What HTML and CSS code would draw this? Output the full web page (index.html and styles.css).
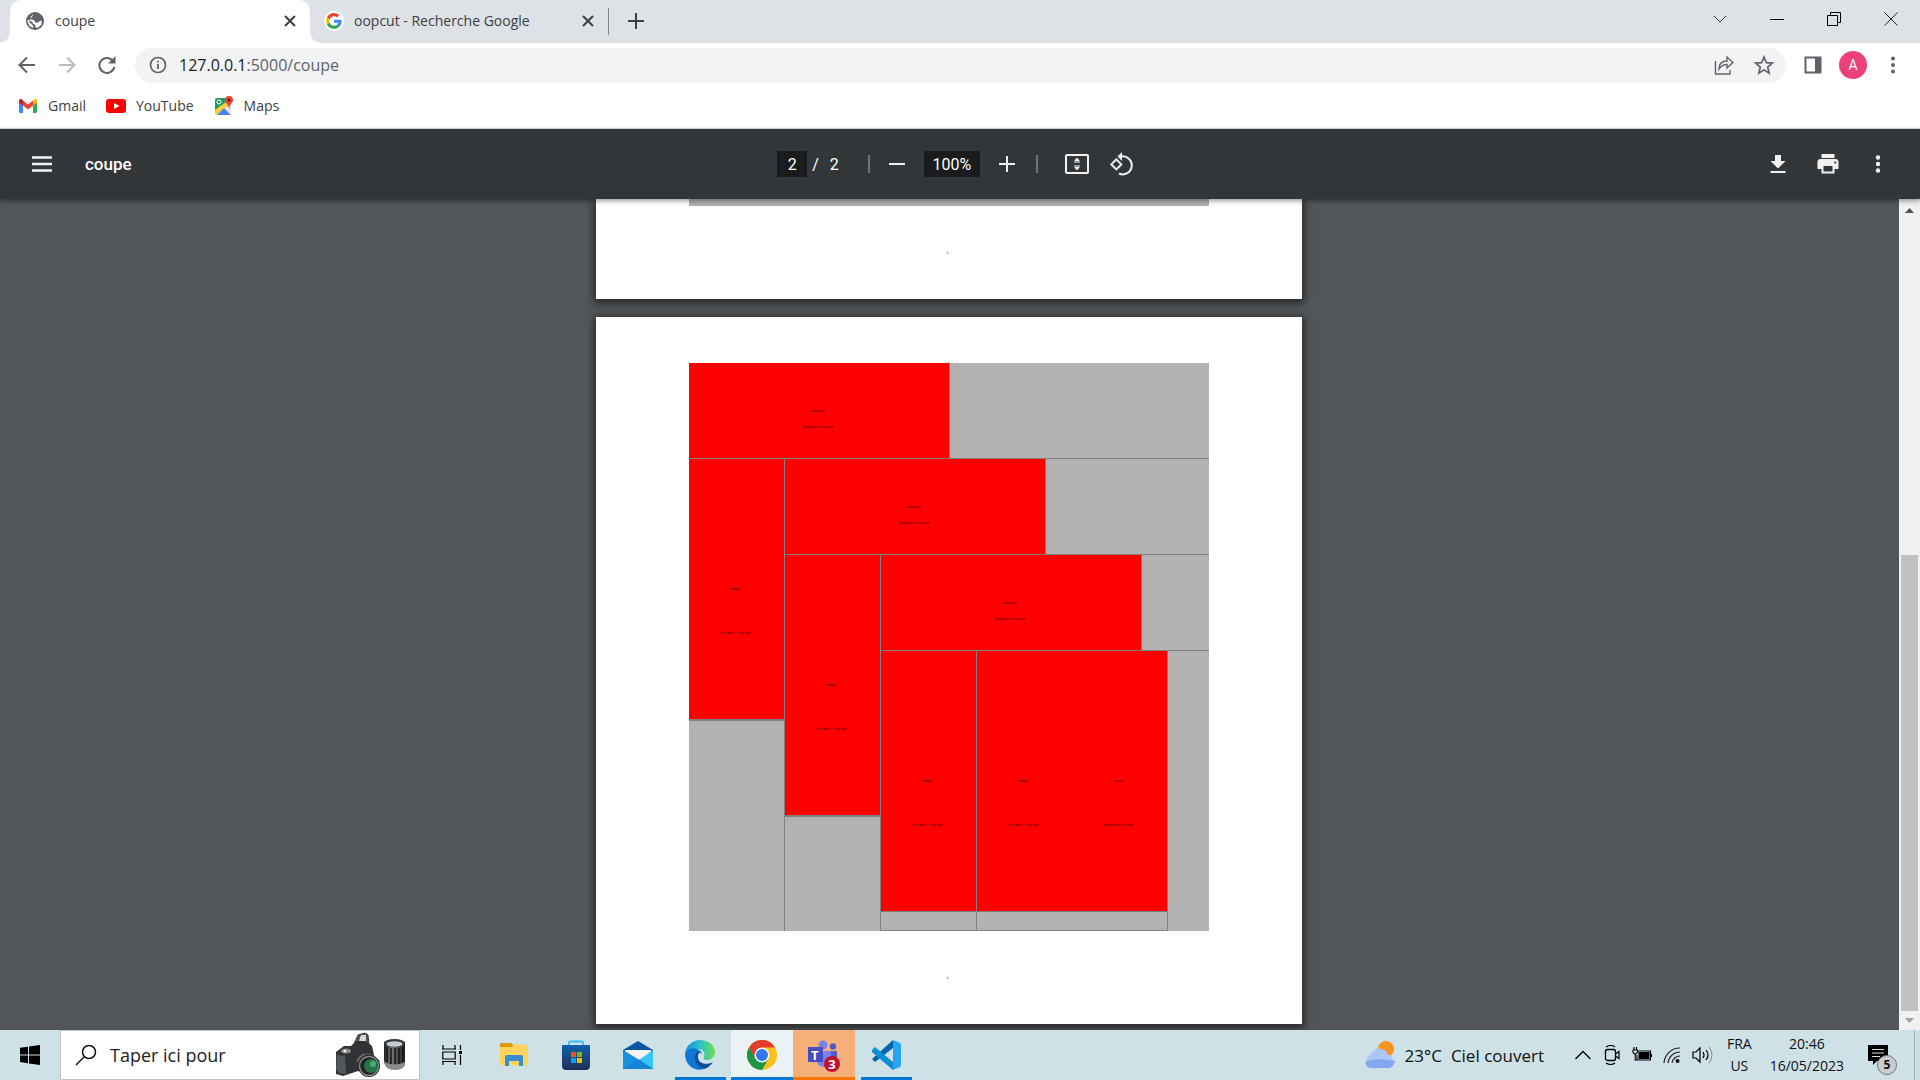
FILE: index.html
```html
<!DOCTYPE html>
<html lang="fr">
<head>
<meta charset="utf-8">
<title>coupe</title>
<link rel="stylesheet" href="styles.css">
</head>
<body>
<header class="browser">
  <div class="tabstrip">
    <div class="tab tab-active">
      <svg class="favicon" width="20" height="20" viewBox="0 0 20 20"><circle cx="10" cy="10" r="9" fill="#5f6368"/><path d="M9 2.500L5.500 6 6 8.500l3 .5 1.500 2.500H13l2.500-2 1.500 1-1 3.500-3.500 3-2-1-.5-2.500-2-.5L7.500 11 3 8.500l-.5 2.500L5 15.500l3.500 1.500-1-3L4 10.500" fill="#fff"/><path d="M10.500 2l4 1.500 2 3.500-3 1.500-1.500-2-2.500-1z" fill="#5f6368"/></svg>
      <span class="tab-title">coupe</span>
      <button class="tab-close" aria-label="Fermer l'onglet coupe"><svg width="12" height="12" viewBox="0 0 12 12"><path d="M1 1l10 10M11 1L1 11" stroke="#3c4043" stroke-width="2"/></svg></button>
    </div>
    <div class="tab">
      <svg class="favicon" width="20" height="20" viewBox="0 0 48 48"><circle cx="24" cy="24" r="24" fill="#fff"/><g transform="translate(5 5) scale(.79)"><path fill="#ea4335" d="M24 9.500c3.500 0 6.700 1.200 9.200 3.600l6.900-6.900C35.900 2.400 30.500 0 24 0 14.600 0 6.500 5.400 2.600 13.200l8 6.200C12.400 13.700 17.700 9.500 24 9.500z"/><path fill="#4285f4" d="M47 24.500c0-1.600-.2-3.100-.4-4.500H24v9h12.900c-.6 3-2.200 5.500-4.700 7.200l7.700 6C44.400 38 47 31.800 47 24.500z"/><path fill="#fbbc05" d="M10.500 28.600a14.500 14.500 0 010-9.200l-8-6.200a24 24 0 000 21.600z"/><path fill="#34a853" d="M24 48c6.500 0 11.900-2.100 15.900-5.800l-7.700-6c-2.200 1.500-4.900 2.300-8.200 2.300-6.300 0-11.600-4.200-13.500-9.900l-8 6.200C6.500 42.600 14.600 48 24 48z"/></g></svg>
      <span class="tab-title">oopcut - Recherche Google</span>
      <button class="tab-close" aria-label="Fermer l'onglet Google"><svg width="12" height="12" viewBox="0 0 12 12"><path d="M1 1l10 10M11 1L1 11" stroke="#3c4043" stroke-width="2"/></svg></button>
    </div>
    <button class="new-tab" aria-label="Nouvel onglet"><svg width="16" height="16" viewBox="0 0 16 16"><path d="M8 0v16M0 8h16" stroke="#3c4043" stroke-width="2"/></svg></button>
    <div class="window-buttons">
      <button aria-label="Rechercher dans les onglets"><svg width="14" height="14" viewBox="0 0 14 14"><path d="M1 4l6 6 6-6" fill="none" stroke="#333"/></svg></button>
      <button aria-label="Réduire"><svg width="14" height="14" viewBox="0 0 14 14"><path d="M0 7.500h14" stroke="#000"/></svg></button>
      <button aria-label="Restaurer"><svg width="14" height="14" viewBox="0 0 14 14"><path d="M.5 3.500h10v10H.5zM3.500 3V.5h10v10H11" fill="none" stroke="#000"/></svg></button>
      <button aria-label="Fermer"><svg width="14" height="14" viewBox="0 0 14 14"><path d="M.5.5l13 13M13.500.5l-13 13" stroke="#222"/></svg></button>
    </div>
  </div>
  <div class="navbar">
    <button class="nav-button" aria-label="Retour"><svg width="18" height="18" viewBox="0 0 18 18"><path d="M17 9H2M9 1.500L1.500 9 9 16.500" fill="none" stroke="#5f6368" stroke-width="2"/></svg></button>
    <button class="nav-button" aria-label="Avancer"><svg width="18" height="18" viewBox="0 0 18 18"><path d="M1 9h15M9 1.500L16.500 9 9 16.500" fill="none" stroke="#babcbe" stroke-width="2"/></svg></button>
    <button class="nav-button" aria-label="Actualiser"><svg width="18" height="18" viewBox="0 0 18 18"><path d="M15 5a7.500 7.500 0 101.300 6" fill="none" stroke="#5f6368" stroke-width="2"/><path d="M17.500 0v7.500H10z" fill="#5f6368"/></svg></button>
    <div class="omnibox">
      <svg width="18" height="18" viewBox="0 0 18 18"><circle cx="9" cy="9" r="7.500" fill="none" stroke="#5f6368" stroke-width="1.700"/><path d="M9 8v5M9 4.800v1.700" stroke="#5f6368" stroke-width="1.800"/></svg>
      <a class="url" href="#coupe">127.0.0.1<span class="url-path">:5000/coupe</span></a>
      <button aria-label="Partager"><svg width="20" height="20" viewBox="0 0 20 20" fill="none" stroke="#5f6368" stroke-width="1.400"><path d="M1.500 6v13H16v-4"/><path d="M5 14c0-5 3-8 8-8V2l6 5.500-6 5.500V9.500c-4 0-6 1.500-8 4.500z"/></svg></button>
      <button aria-label="Ajouter aux favoris"><svg width="20" height="20" viewBox="0 0 20 20"><path d="M10 2l2.300 5.700 6 .4-4.600 4 1.500 6L10 14.900 4.800 18.100l1.500-6-4.600-4 6-.4z" fill="none" stroke="#5f6368" stroke-width="1.700"/></svg></button>
    </div>
    <button class="side-button" aria-label="Panneau latéral"><svg width="18" height="18" viewBox="0 0 18 18"><path d="M1.500 1.500h15v15h-15z" fill="none" stroke="#5f6368" stroke-width="2"/><path d="M11 1h6v16h-6z" fill="#5f6368"/></svg></button>
    <button class="side-button" aria-label="Profil"><span class="avatar">A</span></button>
    <button class="side-button" aria-label="Menu"><svg width="6" height="18" viewBox="0 0 6 18" fill="#5f6368"><circle cx="3" cy="2.500" r="2"/><circle cx="3" cy="9" r="2"/><circle cx="3" cy="15.500" r="2"/></svg></button>
  </div>
  <nav class="bookmarks">
    <a href="#gmail"><svg width="20" height="16" viewBox="0 0 20 16"><path d="M1 3v10.500c0 .8.500 1.500 1.500 1.500H5V6z" fill="#4285f4"/><path d="M15 6v9h2.500c1 0 1.500-.7 1.500-1.500V3z" fill="#34a853"/><path d="M15 2.500v5l4-3V3c0-2-2-2.500-3-1.500z" fill="#fbbc04"/><path d="M5 7.500v-5l5 4 5-4v5l-5 4z" fill="#ea4335"/><path d="M1 3v1.500l4 3v-5L4 1.500C3 .5 1 1 1 3z" fill="#c5221f"/></svg>Gmail</a>
    <a href="#youtube"><svg width="20" height="16" viewBox="0 0 20 16"><rect y="1" width="20" height="14" rx="3" fill="#f00"/><path d="M8 5l5.500 3L8 11z" fill="#fff"/></svg>YouTube</a>
    <a href="#maps"><svg width="20" height="20" viewBox="0 0 20 20"><path d="M1 4a2 2 0 012-2h12v15l-2 2H3a2 2 0 01-2-2z" fill="#e8eaed"/><path d="M1 4a2 2 0 012-2h9v7L1 17z" fill="#1e9e5a"/><path d="M1 14L12 6l3 3L3 19l-2-1z" fill="#fdd03b"/><path d="M3 19l7-7 7 7z" fill="#4285f4"/><path d="M12 9l5 1v7z" fill="#dadce0"/><path d="M15 0a4 4 0 00-4 4c0 3 3.500 4 4 9 .5-5 4-6 4-9a4 4 0 00-4-4z" fill="#ea4335"/><circle cx="15" cy="4" r="1.600" fill="#811411"/><circle cx="5" cy="6" r="2" fill="none" stroke="#fff"/></svg>Maps</a>
  </nav>
</header>

<div class="pdf-toolbar">
  <div class="pdf-left">
    <button class="pdf-wide" aria-label="Menu"><svg width="22" height="16" viewBox="0 0 22 16"><path d="M1 1.500h20M1 8h20M1 14.500h20" stroke="#f1f1f1" stroke-width="2.400"/></svg></button>
    <h1 class="pdf-title">coupe</h1>
  </div>
  <div class="pdf-center">
    <input class="pdf-input page-input" value="2" aria-label="Numéro de page">
    <span class="page-slash">/</span><span class="page-total">2</span>
    <span class="divider divider-first"></span>
    <button class="pdf-button" aria-label="Zoom arrière"><svg width="16" height="16" viewBox="0 0 16 16"><path d="M0 8h16" stroke="#f1f1f1" stroke-width="2"/></svg></button>
    <input class="pdf-input zoom-input" value="100%" aria-label="Niveau de zoom">
    <button class="pdf-button" aria-label="Zoom avant"><svg width="16" height="16" viewBox="0 0 16 16"><path d="M0 8h16M8 0v16" stroke="#f1f1f1" stroke-width="2"/></svg></button>
    <span class="divider divider-last"></span>
    <div class="pdf-pair">
      <button class="pdf-button" aria-label="Ajuster à la page"><svg width="24" height="20" viewBox="0 0 24 20"><rect x="1" y="1" width="22" height="18" rx="1" fill="none" stroke="#f1f1f1" stroke-width="2"/><path d="M12 3.500l3.200 4H8.800zM12 16.500l3.200-4H8.800z" fill="#f1f1f1"/><path d="M9 8.500h6M9 11.500h6" stroke="#9a9c9d"/></svg></button>
      <button class="pdf-button" aria-label="Faire pivoter"><svg width="24" height="24" viewBox="0 0 24 24"><path d="M7.300 7.400L2.300 12.400 7.300 17.400l5-5z" fill="none" stroke="#f1f1f1" stroke-width="2"/><path d="M12 4.500A9 9 0 1110 21.500" fill="none" stroke="#f1f1f1" stroke-width="2"/><path d="M13 0v9L8.500 4.500z" fill="#f1f1f1"/></svg></button>
    </div>
  </div>
  <div class="pdf-right">
    <button class="pdf-wide" aria-label="Télécharger"><svg width="16" height="20" viewBox="0 0 16 20"><path d="M5 1h6v6h4.500L8 14.500.5 7H5zM.5 17h15v2H.5z" fill="#f1f1f1"/></svg></button>
    <button class="pdf-wide" aria-label="Imprimer"><svg width="22" height="20" viewBox="0 0 22 20"><path d="M4.500 0h13v4h-13zM3.500 5h15A3 3 0 0121.500 8v7h-4v4.500h-13V15h-4V8a3 3 0 013-3z" fill="#f1f1f1"/><path d="M6.500 12h9v5.500h-9z" fill="#323639"/><circle cx="18.300" cy="8.500" r="1.100" fill="#323639"/></svg></button>
    <button class="pdf-wide" aria-label="Plus d'actions"><svg width="6" height="20" viewBox="0 0 6 20" fill="#f1f1f1"><circle cx="3" cy="3.500" r="2.200"/><circle cx="3" cy="10" r="2.200"/><circle cx="3" cy="16.500" r="2.200"/></svg></button>
  </div>
</div>

<main class="viewer">
  <div class="sheets">
    <section class="sheet sheet-previous">
      <div class="plate-end"></div>
      <p class="sheet-number">1</p>
    </section>
    <section class="sheet sheet-current">
      <div class="plate">
        <div class="strip"><div class="piece lying"><span>Item0 (r)</span><span>20.0 mm x 55.0 mm</span></div></div>
        <div class="remainder">
          <div class="column"><div class="piece standing"><span>Item0</span><span>20.0 mm x 55.0 mm</span></div></div>
          <div class="nest">
            <div class="strip"><div class="piece lying"><span>Item0 (r)</span><span>20.0 mm x 55.0 mm</span></div></div>
            <div class="remainder">
              <div class="column"><div class="piece standing"><span>Item0</span><span>20.0 mm x 55.0 mm</span></div></div>
              <div class="nest">
                <div class="strip"><div class="piece lying"><span>Item0 (r)</span><span>20.0 mm x 55.0 mm</span></div></div>
                <div class="remainder">
                  <div class="column closed"><div class="piece standing"><span>Item0</span><span>20.0 mm x 55.0 mm</span></div></div>
                  <div class="column closed double">
                    <div class="piece standing"><span>Item0</span><span>20.0 mm x 55.0 mm</span></div>
                    <div class="piece standing"><span>Item0</span><span>20.0 mm x 55.0 mm</span></div>
                  </div>
                </div>
              </div>
            </div>
          </div>
        </div>
      </div>
      <p class="sheet-number">2</p>
    </section>
  </div>
  <div class="scrollbar">
    <svg width="21" height="21" viewBox="0 0 21 21"><path d="M6 14l4.500-5L15 14z" fill="#505050"/></svg>
    <div class="scroll-track"><div class="scroll-thumb"></div></div>
    <svg width="21" height="19" viewBox="0 0 21 19"><path d="M6 7l4.500 5L15 7z" fill="#a3a3a3"/></svg>
  </div>
</main>

<footer class="taskbar">
  <button class="start" aria-label="Démarrer"><svg width="20" height="20" viewBox="0 0 20 20"><path d="M0 2.800L8 1.700V9.400H0zM9 1.500L20 0v9.400H9zM0 10.400h8v7.800L0 17.100zM9 10.400h11V20L9 18.400z"/></svg></button>
  <div class="search">
    <svg width="22" height="22" viewBox="0 0 22 22"><circle cx="14" cy="8" r="6.500" fill="none" stroke="#111" stroke-width="1.500"/><path d="M9.500 12.500L1 21" stroke="#111" stroke-width="1.500"/></svg>
    <input class="search-input" value="Taper ici pour" aria-label="Rechercher">
    <svg width="72" height="46" viewBox="0 0 72 46"><defs><linearGradient id="barrel"><stop offset="0" stop-color="#222"/><stop offset=".35" stop-color="#777"/><stop offset="1" stop-color="#222"/></linearGradient></defs><path d="M19 12l4-9 7-2 3 2 1 10" fill="#555" stroke="#333"/><path d="M24 9l2-6h5v6z" fill="#d8d8d0"/><path d="M1 20l8-6 7 0 5-5h10l6 5 2 9-2 20-14-4-15 5-7-2z" fill="#303235"/><path d="M2 22q4 3 8 1l1 19-7-1-3-4z" fill="#55585b"/><ellipse cx="11" cy="19" rx="5" ry="2.500" fill="#888"/><circle cx="10" cy="19" r="1.500" fill="#eee"/><path d="M22 27q5-8 15-5l8 7-13 15-9-8z" fill="#484b4e"/><path d="M22 29q3-5 7-7M25 34q3-7 10-11" stroke="#888" fill="none"/><circle cx="34" cy="34" r="11" fill="#222"/><circle cx="34" cy="34" r="9.500" fill="none" stroke="#888" stroke-width="1.500"/><circle cx="36" cy="34" r="7" fill="#257347"/><circle cx="38" cy="32" r="3" fill="#4dab73"/><path d="M49 10v18q0 9 11 9t10-9V10z" fill="url(#barrel)"/><path d="M52 15v15M56 16v16M60 16v16M64 16v16M68 15v15" stroke="#151515" stroke-width="1.500"/><path d="M49 30q11 5 21 0v3q-2 5-10 5t-10-5z" fill="#8a8c8e"/><ellipse cx="59.500" cy="11" rx="10.500" ry="4" fill="#34383b"/><ellipse cx="59.500" cy="12" rx="8" ry="2.700" fill="#c5cdd2"/></svg>
  </div>
  <div class="apps">
    <button aria-label="Vue des tâches"><svg width="20" height="20" viewBox="0 0 20 20"><path d="M1 0v4.500M13 0v4.500M0 4h14M.8 7h12.400v7H.8zM0 16.500h14M1 16v4M13 16v4M18.500 0v5M18.500 10v10" fill="none" stroke="#000" stroke-width="1.200"/><path d="M17 6h3v3h-3z"/></svg></button>
    <button aria-label="Explorateur de fichiers"><svg width="28" height="24" viewBox="0 0 28 24"><path d="M0 1.500Q0 0 1.500 0H11l3 3-2 5H0z" fill="#dc9800"/><path d="M0 4h12l2-2.500h12Q28 1.500 28 4v17q0 1.500-2 1.500H2Q0 22.500 0 21z" fill="#ffd35c"/><path d="M5 23V14q0-2 2-2h14q2 0 2 2v9h-4v-5H9v5z" fill="#348ed0"/></svg></button>
    <button aria-label="Microsoft Store"><svg width="30" height="30" viewBox="0 0 30 30"><defs><linearGradient id="store" x2="0" y2="1"><stop stop-color="#0f62ad"/><stop offset="1" stop-color="#202d55"/></linearGradient></defs><path d="M8 7V3q0-1.500 1.500-1.500h11Q22 1.500 22 3v4" fill="none" stroke="#34c3ef" stroke-width="2"/><path d="M1 5h28v21q0 4-4 4H5q-4 0-4-4z" fill="url(#store)"/><path d="M10 12h5v5h-5z" fill="#f25022"/><path d="M16 12h5v5h-5z" fill="#7fba00"/><path d="M10 18h5v5h-5z" fill="#00a4ef"/><path d="M16 18h5v5h-5z" fill="#ffb900"/></svg></button>
    <button aria-label="Courrier"><svg width="30" height="28" viewBox="0 0 30 28"><path d="M0 9L15 0l15 9v2H0z" fill="#0855a2"/><path d="M2 9h26v9L15 22 2 18z" fill="#f4f4f4"/><path d="M0 9l30 18V28H0z" fill="#1b8edf"/><path d="M30 9v19L16 19z" fill="#36c5f4"/><path d="M0 28l16-9.500L30 28z" fill="#1684d8"/></svg></button>
    <button class="running" aria-label="Microsoft Edge"><svg width="30" height="30" viewBox="0 0 30 30"><defs><linearGradient id="edge"><stop stop-color="#168ed6"/><stop offset=".5" stop-color="#2bc2cc"/><stop offset="1" stop-color="#6fe04c"/></linearGradient></defs><path d="M0 14C1 5 8 0 15 0c9 0 15 6 15 12 0 5-4 8-8 8-3 0-4-1-3-3 2-5-2-8-6-8-6 0-11 2-13 5z" fill="url(#edge)"/><path d="M0 14c2-5 7-7 12-5 3 1 5 3 5 5-3-3-6 0-6 4 0 6 4 9 8 11C9 32 0 25 0 14z" fill="#0d78d4"/><path d="M11 13c-3 6-1 13 8 16 4-1 7-4 9-7-7 4-16 1-15-6 0-2 1-3 2-4-2-1-3 0-4 1z" fill="#104e9c"/></svg></button>
    <button class="current" aria-label="Google Chrome"><svg width="30" height="30" viewBox="0 0 30 30"><circle cx="15" cy="15" r="15" fill="#fbc116"/><path d="M2 7.500A15 15 0 0128 7.500H15L8.500 18.800z" fill="#e33b2e"/><path d="M2 7.500A15 15 0 0015 30l6.500-11.300H8.500z" fill="#1e9544"/><circle cx="15" cy="15" r="7.500" fill="#fff"/><circle cx="15" cy="15" r="6" fill="#3478ed"/></svg></button>
    <button class="alert" aria-label="Microsoft Teams"><svg width="32" height="30" viewBox="0 0 32 30"><circle cx="15" cy="5" r="4.500" fill="#7b83eb"/><circle cx="25" cy="6.500" r="3.200" fill="#5059c9"/><path d="M20 11h9v12h-9z" fill="#5059c9"/><path d="M9 11h14v9q0 7-7 7t-7-7z" fill="#7b83eb"/><rect y="7" width="15" height="15" rx="1" fill="#454ebd"/></svg><span class="teams-letter">T</span><span class="teams-count">3</span></button>
    <button class="running" aria-label="Visual Studio Code"><svg width="30" height="30" viewBox="0 0 30 30"><path d="M1 19l3 3L22 8V0z" fill="#0065a9"/><path d="M1 10l3-3 18 15v8L1 12z" fill="#0d8ed6"/><path d="M22 0l7 3q1 .5 1 2v20q0 1.500-1 2l-7 3z" fill="#27a5f2"/></svg></button>
  </div>
  <div class="tray">
    <a class="weather" href="#meteo"><svg width="30" height="28" viewBox="0 0 30 28"><circle cx="21" cy="8" r="8" fill="#f7931e"/><path d="M7 27a7 7 0 01-1-13.500 9 9 0 0117 0A7 7 0 0123 27z" fill="#a9c8f8"/><path d="M7 27q-6 0-7-6 12-5 30-1-1 7-7 7z" fill="#82a8ee"/></svg><span>23°C</span><span>Ciel couvert</span></a>
    <div class="tray-icons">
      <svg width="18" height="20" viewBox="0 0 18 20"><path d="M1.500 14L9 6.500l7.500 7.500" fill="none" stroke="#000" stroke-width="1.300"/></svg>
      <svg width="18" height="20" viewBox="0 0 18 20"><rect x="2.500" y="4.500" width="10" height="11" rx="2" fill="none" stroke="#000" stroke-width="1.300"/><path d="M12.500 9l3.500-2.500v7L12.500 11M3 2q5-3 9 0M3 18q5 3 9 0" fill="none" stroke="#000" stroke-width="1.200"/></svg>
      <svg width="20" height="20" viewBox="0 0 20 20"><path d="M6.500 7h11v7h-11z"/><path d="M6 6h12.500v9H5V10M2 2v3M4.500 2v3M1 5h4.500v2.500L4 9H2.500L1 7.500zM3.200 9v6H5M19.500 9v3" fill="none" stroke="#000" stroke-width="1.100"/></svg>
      <svg width="18" height="20" viewBox="0 0 18 20"><path d="M1 18A16 16 0 0117 3M5 18A12 12 0 0117 7M9 18a8 8 0 018-7" fill="none" stroke="#222" stroke-width="1.200"/><circle cx="14.500" cy="16" r="2"/></svg>
      <svg width="22" height="20" viewBox="0 0 22 20"><path d="M1 7h3l4-4v14l-4-4H1zM11 7q2 3 0 6M14 5q4 5 0 10" fill="none" stroke="#000" stroke-width="1.200"/><path d="M17 2q6 8 0 16" fill="none" stroke="#889"/></svg>
    </div>
    <div class="tray-lines"><span>FRA</span><span>US</span></div>
    <div class="tray-lines clock"><span>20:46</span><span>16/05/2023</span></div>
    <button class="notifications" aria-label="Notifications"><svg width="20" height="20" viewBox="0 0 20 20"><path d="M0 0h20v16H9l-4 4v-4H0z"/><path d="M4 4.500h12M4 8h12M4 11.500h8" stroke="#cde1e6"/></svg><span class="notification-count">5</span></button>
  </div>
</footer>
</body>
</html>
```
FILE: styles.css
```css
* { box-sizing: border-box; }

body {
  margin: 0;
  height: 100vh;
  display: flex;
  flex-direction: column;
  overflow: hidden;
  background: #525659;
  color: #3c4043;
  font-family: "Open Sans", "Noto Sans", sans-serif;
  font-size: 14px;
}

button {
  display: flex;
  align-items: center;
  justify-content: center;
  padding: 0;
  border: 0;
  background: none;
  font: inherit;
  color: inherit;
}

input { border: 0; padding: 0; font: inherit; }
a { color: inherit; text-decoration: none; }
svg { display: block; flex: none; }
p, h1 { margin: 0; }

/* Browser chrome */
.browser { background: #fff; border-bottom: 1px solid #dadce0; }

.tabstrip {
  display: flex;
  align-items: stretch;
  height: 43px;
  padding-left: 10px;
  background: #dee1e6;
}

.tab {
  display: flex;
  align-items: center;
  width: 299px;
  padding: 0 12px 2px 14px;
  border-right: 1px solid #80868b;
  border-image: linear-gradient(transparent 9px, #80868b 9px, #80868b 34px, transparent 34px) 1;
}

.tab-active {
  position: relative;
  width: 300px;
  padding-left: 15px;
  background: #fff;
  border: 0;
  border-radius: 10px 10px 0 0;
}

/* Curved feet of the active tab */
.tab-active::before,
.tab-active::after {
  content: "";
  position: absolute;
  bottom: 0;
  width: 10px;
  height: 10px;
}

.tab-active::before { right: 100%; background: radial-gradient(circle at 0 0, transparent 9px, #fff 10px); }
.tab-active::after { left: 100%; background: radial-gradient(circle at 100% 0, transparent 9px, #fff 10px); }

.favicon { margin-right: 10px; }
.tab-title { flex: 1; white-space: nowrap; }
.tab-close { width: 16px; height: 16px; }
.new-tab { width: 54px; padding-bottom: 2px; }
.window-buttons { display: flex; margin-left: auto; padding: 0 1px 6px 0; }
.window-buttons button { width: 57px; }

.navbar { display: flex; align-items: center; height: 44px; padding: 0 7px; }
.nav-button { width: 40px; height: 36px; }

.omnibox {
  display: flex;
  flex: 1;
  align-items: center;
  gap: 12px;
  height: 35px;
  margin: 0 7px 0 8px;
  padding: 0 8px 0 14px;
  border-radius: 18px;
  background: #f1f3f4;
}

.omnibox button { width: 28px; height: 28px; }
.url { flex: 1; font-size: 16px; color: #202124; }
.url-path { color: #5f6368; }
.side-button { width: 40px; height: 36px; }

.avatar {
  width: 28px;
  height: 28px;
  border-radius: 50%;
  background: #ec407a;
  color: #fff;
  font: 14px/28px Roboto, sans-serif;
}

.bookmarks { display: flex; gap: 20px; height: 41px; padding: 0 18px 4px; }
.bookmarks a { display: flex; align-items: center; gap: 10px; }

/* PDF viewer toolbar */
.pdf-toolbar {
  position: relative;
  z-index: 1;
  display: grid;
  grid-template-columns: 1fr auto 1fr;
  align-items: center;
  height: 70px;
  padding: 0 17px;
  background: #323639;
  box-shadow: 0 2px 5px rgba(0, 0, 0, .4);
  color: #fff;
  font-family: Roboto, sans-serif;
  font-size: 16px;
}

.pdf-left, .pdf-center, .pdf-right { display: flex; align-items: center; }
.pdf-right { justify-content: flex-end; }
.pdf-center { gap: 5px; }
.pdf-wide { width: 50px; height: 44px; }
.pdf-title { margin-left: 18px; font-size: 17px; font-weight: 500; }
.pdf-button { width: 44px; height: 44px; }
.pdf-pair { display: flex; }

.pdf-input {
  height: 26px;
  background: #191b1c;
  color: #fff;
  text-align: center;
}

.page-input { width: 30px; }
.zoom-input { width: 56px; }
.page-total { margin-left: 6px; }
.divider { width: 2px; height: 18px; background: #707375; }
.divider-first { margin-left: 24px; }
.divider-last { margin: 0 12px 0 2px; }

/* Document */
.viewer { display: flex; flex: 1; min-height: 0; }

.sheets {
  display: flex;
  flex: 1;
  flex-direction: column;
  align-items: center;
  gap: 18px;
  padding-right: 1px;
  overflow: hidden;
}

.sheet {
  display: flex;
  flex: none;
  flex-direction: column;
  align-items: center;
  width: 706px;
  background: #fff;
  box-shadow: 0 2px 8px 2px rgba(0, 0, 0, .55);
}

.sheet-previous { height: 100px; }
.sheet-current { padding-top: 46px; height: 707px; }
.plate-end { width: 520px; height: 7px; background: #b2b2b2; }

.sheet-number {
  margin-top: 45px;
  padding-right: 3px;
  font: 3px/4px "DejaVu Sans", sans-serif;
  color: #000;
}

.plate {
  display: flex;
  flex-direction: column;
  width: 520px;
  height: 568px;
  background: #b2b2b2;
}

.strip { display: flex; border-bottom: 1px solid #808080; }
.remainder { display: flex; flex: 1; }
.nest { display: flex; flex: 1; flex-direction: column; }
.column { border-right: 1px solid #808080; }
.column > .piece { border-bottom: 2px solid #808080; }
.closed { border-bottom: 1px solid #808080; }
.closed > .piece { border-bottom-width: 1px; }
.double { display: flex; align-items: flex-start; }

.piece {
  display: flex;
  flex-direction: column;
  align-items: center;
  box-sizing: content-box;
  background: #f00;
  color: #000;
  font: 3px/4px "DejaVu Sans", sans-serif;
  white-space: nowrap;
}

.lying {
  width: 258px;
  height: 49px;
  padding: 46px 2px 0 0;
  gap: 12px;
  border-right: 1px solid #808080;
}

.standing { width: 93px; height: 132px; padding: 128px 2px 0 0; gap: 40px; }

.scrollbar {
  display: flex;
  flex-direction: column;
  width: 21px;
  background: #f1f1f1;
}

.scroll-track {
  display: flex;
  flex: 1;
  flex-direction: column;
  justify-content: flex-end;
  padding: 0 2px;
}

.scroll-thumb { height: 57.600%; background: #c1c1c1; }

/* Taskbar */
.taskbar {
  display: flex;
  height: 50px;
  background: #cde1e6;
  color: #111;
}

.start { width: 60px; }

.search {
  display: flex;
  align-items: center;
  width: 360px;
  padding: 0 12px 0 14px;
  border: 1px solid #c4c4c4;
  background: #fff;
}

.search-input {
  flex: 1;
  min-width: 0;
  margin-left: 13px;
  background: none;
  font-size: 18px;
  color: #222;
}

.apps { display: flex; padding-left: 1px; }
.apps button { position: relative; width: 62px; }
.running { background: linear-gradient(#0078d7, #0078d7) center bottom / 51px 3px no-repeat; }
.current { background: #eaf2f4; border-bottom: 3px solid #0078d7; }
.alert { background: #f5b07a; border-bottom: 3px solid #ff7300; }
.current svg, .alert svg { margin-top: 3px; }

.teams-letter {
  position: absolute;
  left: 18px;
  top: 16px;
  font: bold 13px/18px "Open Sans", sans-serif;
  color: #fff;
}

.teams-count {
  position: absolute;
  left: 31px;
  top: 26px;
  width: 16px;
  height: 16px;
  border-radius: 50%;
  background: #c4122f;
  color: #fff;
  font: bold 13px/16px "Open Sans", sans-serif;
}

.tray {
  display: flex;
  align-items: center;
  margin-left: auto;
  margin-right: 5px;
  border-right: 1px solid #9fb2b8;
}

.weather { display: flex; align-items: center; gap: 9px; font-size: 17px; white-space: nowrap; }
.tray-icons { display: flex; align-items: center; gap: 11px; margin: 0 13px 0 30px; }

.tray-lines {
  display: flex;
  flex-direction: column;
  align-items: center;
  line-height: 22px;
}

.clock { margin: 0 24px 0 18px; }
.notifications { position: relative; width: 20px; height: 50px; margin-right: 26px; }

.notification-count {
  position: absolute;
  left: 9px;
  top: 25px;
  width: 20px;
  height: 20px;
  border: 1px solid #777;
  border-radius: 50%;
  background: #c9cdcf;
  font: bold 12px/18px "Open Sans", sans-serif;
}
```
